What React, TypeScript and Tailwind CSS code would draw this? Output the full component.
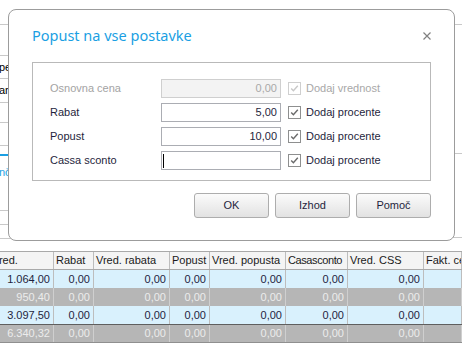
import React from "react";

const font = { fontFamily: '"Liberation Sans", Arial, sans-serif' };

function Check({ disabled }: { disabled?: boolean }) {
  return (
    <div
      className={
        "w-[13px] h-[13px] border flex items-center justify-center bg-white " +
        (disabled ? "border-[#cfcfcf]" : "border-[#8e8f8f]")
      }
    >
      <svg width="9" height="9" viewBox="0 0 9 9">
        <path
          d="M1.2 4.6 L3.4 6.8 L7.8 1.8"
          fill="none"
          stroke={disabled ? "#c8c8c8" : "#6a6a6a"}
          strokeWidth="1.4"
        />
      </svg>
    </div>
  );
}

function Row({
  label,
  value,
  check,
  disabled,
  cursor,
}: {
  label: string;
  value: string;
  check: string;
  disabled?: boolean;
  cursor?: boolean;
}) {
  return (
    <div className="flex items-center h-[19px]">
      <div className={"w-[111px] " + (disabled ? "text-[#a3a3a3]" : "text-[#1f1f3d]")}>{label}</div>
      <div
        className={
          "w-[120px] h-[19px] border flex items-center justify-end pr-[3px] " +
          (disabled ? "bg-[#f3f3f3] border-[#cfcfcf] text-[#a8a8a8]" : "bg-white border-[#abadb3] text-[#1f1f3d]")
        }
      >
        {cursor ? <div className="mr-auto ml-[1px] w-[1px] h-[14px] bg-black" /> : value}
      </div>
      <div className="ml-[7px]">
        <Check disabled={disabled} />
      </div>
      <div className={"ml-[5px] " + (disabled ? "text-[#a8a8a8]" : "text-[#1f1f3d]")}>{check}</div>
    </div>
  );
}

function Btn({ children, w }: { children: React.ReactNode; w: string }) {
  return (
    <div
      className={
        w +
        " h-[25px] rounded-[3px] border border-[#adadad] bg-gradient-to-b from-[#fbfbfb] to-[#e2e2e2] flex items-center justify-center text-[#1f1f3d]"
      }
    >
      {children}
    </div>
  );
}

const cols = ["1.064,00", "950,40", "3.097,50", "6.340,32"];

export default function App() {
  const rows = cols.map((v, i) => ({ first: v, kind: i % 2 === 0 ? "blue" : "gray", total: i === 3 }));
  return (
    <div className="relative w-[462px] h-[358px] bg-white overflow-hidden text-[11px]" style={font}>
      {/* background window */}
      <div className="h-[251px] flex flex-col">
        <div className="h-[25px] border-b border-[#c9c9c9]" />
        <div className="flex flex-1">
          <div className="w-[40px] flex flex-col">
            <div className="h-[31px] border-b border-[#c9c9c9]" />
            <div className="h-[23px] border-b border-[#c9c9c9] flex items-center text-black">
              <span className="ml-[-1px]">pe</span>
            </div>
            <div className="h-[24px] border-b border-[#c9c9c9] flex items-center text-black">
              <span className="ml-[-1px]">ar</span>
            </div>
            <div className="h-[20px] border-b border-[#c9c9c9]" />
            <div className="h-[23px] border-b border-[#c9c9c9]" />
            <div className="h-[8px]" />
            <div className="h-[2px] bg-[#1a9fe3]" />
            <div className="h-[55px] border-b border-[#c9c9c9] text-[#1a9fe3]">
              <span className="ml-[-1px] block mt-[8px]">nč</span>
            </div>
            <div className="h-[14px] border-b border-[#c9c9c9]" />
            <div className="h-[14px] border-b border-[#c9c9c9]" />
          </div>
          <div className="flex-1" />
          <div className="w-[30px] flex flex-col">
            <div className="h-[129px] border-b border-[#c9c9c9]" />
            <div className="h-[84px] border-b border-[#c9c9c9]" />
          </div>
        </div>
      </div>

      {/* table */}
      <div className="border-t border-[#a9a9a9]">
        <div className="grid grid-cols-[54px_40px_76px_40px_76px_62px_76px_1fr] h-[18px] bg-[#f4f4f4] border-b border-[#a9a9a9] text-[#1a1a1a]">
          <div className="border-r border-[#bdbdbd] overflow-hidden whitespace-nowrap leading-[17px]">
            <span className="ml-[-8px]">Vred.</span>
          </div>
          {["Rabat", "Vred. rabata", "Popust", "Vred. popusta", "Casasconto", "Vred. CSS", "Fakt. cena"].map((h) => (
            <div
              key={h}
              className={
                "border-r border-[#bdbdbd] pl-[2px] overflow-hidden whitespace-nowrap leading-[17px]" +
                (h === "Casasconto" ? " tracking-[-0.4px]" : "")
              }
            >
              {h}
            </div>
          ))}
        </div>
        {rows.map((r, i) => (
          <div
            key={i}
            className={
              "grid grid-cols-[54px_40px_76px_40px_76px_62px_76px_1fr] " +
              (r.kind === "blue" ? "bg-[#d9f1fd] text-[#1f1f3d] h-[18px]" : "bg-[#b6b6b6] text-[#ececec] h-[18px]") +
              (r.total ? " border-t border-t-[#5f5f5f] border-b border-b-[#8f8f8f] h-[19px]" : "")
            }
          >
            {[r.first, "0,00", "0,00", "0,00", "0,00", "0,00", "0,00", ""].map((c, j) => (
              <div
                key={j}
                className={
                  "border-r flex items-center justify-end pr-[3px] " +
                  (r.kind === "blue" ? "border-[#bdbdbd]" : "border-[#cfcfcf]")
                }
              >
                {c}
              </div>
            ))}
          </div>
        ))}
      </div>

      {/* dialog */}
      <div className="absolute left-[8px] top-[9px] w-[447px] h-[232px] rounded-[8px] border border-[#9c9c9c] bg-white px-[23px] flex flex-col">
        <div className="h-[52px] flex items-center justify-between">
          <div className="text-[14.5px] text-[#1a9fe3]" style={{ fontFamily: '"Noto Sans", sans-serif' }}>
            Popust na vse postavke
          </div>
          <svg width="10" height="10" viewBox="0 0 10 10" className="mr-[-1px]">
            <path d="M1.5 1.5 L8.5 8.5 M8.5 1.5 L1.5 8.5" stroke="#808080" strokeWidth="1.2" />
          </svg>
        </div>
        <div className="border border-[#b9b9b9] pt-[16px] pb-[10px] pl-[17px] flex flex-col gap-[5px]">
          <Row label="Osnovna cena" value="0,00" check="Dodaj vrednost" disabled />
          <Row label="Rabat" value="5,00" check="Dodaj procente" />
          <Row label="Popust" value="10,00" check="Dodaj procente" />
          <Row label="Cassa sconto" value="" check="Dodaj procente" cursor />
        </div>
        <div className="mt-[12px] flex justify-end gap-[6px]">
          <Btn w="w-[75px]">OK</Btn>
          <Btn w="w-[75px]">Izhod</Btn>
          <Btn w="w-[75px]">Pomoč</Btn>
        </div>
      </div>
    </div>
  );
}
